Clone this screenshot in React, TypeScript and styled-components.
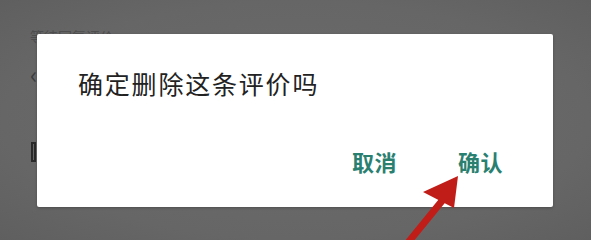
import * as React from 'react';
import styled, { createGlobalStyle } from 'styled-components';

const GlobalStyle = createGlobalStyle`
  html, body {
    margin: 0;
    padding: 0;
    background: #686868;
  }
  body {
    font-family: "Noto Sans CJK SC", "Noto Sans", sans-serif;
  }
`;

const Screen = styled.div`
  position: relative;
  width: 591px;
  height: 240px;
  overflow: hidden;
  background: radial-gradient(ellipse at center, #6c6c6c 0%, #666 70%, #5f5f5f 100%);
`;

// the dimmed page behind the dialog, only its left edge shows
const BackPage = styled.div`
  display: flex;
  flex-direction: column;
  padding: 26px 0 0 30px;
`;

const BackText = styled.div`
  font-size: 14px;
  line-height: 20px;
  color: #4e4e4e;
`;

const BackChevron = styled.div`
  font-size: 24px;
  line-height: 24px;
  color: #3c3c3c;
  margin-top: 16px;
`;

const BackBlock = styled.div`
  width: 5px;
  height: 20px;
  margin-top: 56px;
  margin-left: 1px;
  border: 2px solid #2a2a2a;
  box-sizing: border-box;
`;

const Dialog = styled.div`
  position: absolute;
  left: 37px;
  top: 34px;
  width: 516px;
  height: 173px;
  background: #fff;
  border-radius: 2px;
  box-shadow: 0 1px 3px rgba(0, 0, 0, 0.25);
  display: flex;
  flex-direction: column;
  justify-content: space-between;
  box-sizing: border-box;
  padding: 31px 0 32px 41px;
`;

const Message = styled.div`
  font-size: 25px;
  line-height: 36px;
  color: #222;
  letter-spacing: 1.8px;
`;

const Actions = styled.div`
  display: flex;
  justify-content: flex-end;
  gap: 61px;
  padding-right: 50px;
`;

const ActionButton = styled.button`
  border: none;
  background: none;
  padding: 0;
  font-family: "Noto Sans CJK SC", sans-serif;
  font-size: 22px;
  line-height: 28px;
  font-weight: 700;
  color: #2a8070;
  letter-spacing: 0.5px;
`;

const Arrow = styled.svg`
  position: absolute;
  left: 0;
  top: 0;
  pointer-events: none;
`;

export default function App() {
  return (
    <>
      <GlobalStyle />
      <Screen>
        <BackPage>
          <BackText>等待回复评价</BackText>
          <BackChevron>‹</BackChevron>
          <BackBlock />
        </BackPage>
        <Dialog>
          <Message>确定删除这条评价吗</Message>
          <Actions>
            <ActionButton>取消</ActionButton>
            <ActionButton>确认</ActionButton>
          </Actions>
        </Dialog>
        <Arrow width="591" height="240" viewBox="0 0 591 240">
          <path d="M402 250 L446 196" stroke="#c11d18" strokeWidth="7" strokeLinecap="round" />
          <polygon points="458,176 423,192 454,208" fill="#c11d18" />
        </Arrow>
      </Screen>
    </>
  );
}
